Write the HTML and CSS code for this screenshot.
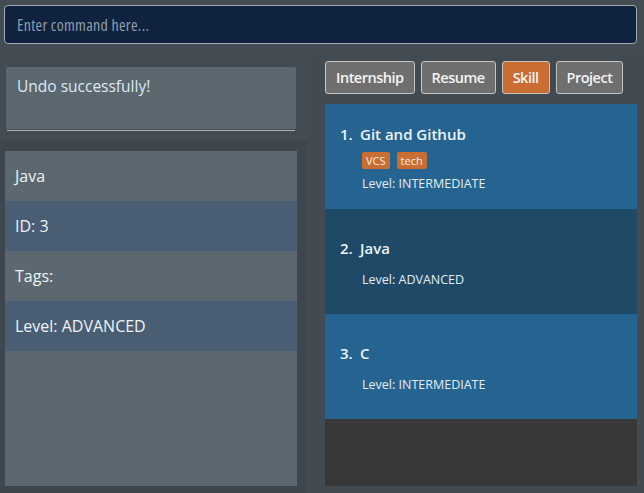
FILE: index.html
```html
<!DOCTYPE html>
<html>
<head>
<meta charset="utf-8">
<link rel="stylesheet" href="styles.css">
</head>
<body>
<div class="app">
  <div class="command">
    <input class="command-input" type="text" placeholder="Enter command here...">
  </div>
  <div class="main">
    <div class="left">
      <div class="result-wrap">
        <div class="result">Undo successfully!</div>
      </div>
      <div class="detail-wrap">
        <div class="detail">
          <div class="row odd">Java</div>
          <div class="row even">ID: 3</div>
          <div class="row odd">Tags:</div>
          <div class="row even">Level: ADVANCED</div>
          <div class="rest"></div>
        </div>
      </div>
    </div>
    <div class="right">
      <div class="tabs">
        <div class="tab">Internship</div>
        <div class="tab">Resume</div>
        <div class="tab active">Skill</div>
        <div class="tab">Project</div>
      </div>
      <div class="list">
        <div class="card light tagged">
          <div class="title"><span class="num">1.</span>Git and Github</div>
          <div class="tags"><span class="tag">VCS</span><span class="tag">tech</span></div>
          <div class="level">Level: INTERMEDIATE</div>
        </div>
        <div class="card dark">
          <div class="title"><span class="num">2.</span>Java</div>
          <div class="level">Level: ADVANCED</div>
        </div>
        <div class="card light">
          <div class="title"><span class="num">3.</span>C</div>
          <div class="level">Level: INTERMEDIATE</div>
        </div>
        <div class="empty"></div>
      </div>
    </div>
  </div>
</div>
</body>
</html>
```

FILE: styles.css
```css
* { box-sizing: border-box; }
html, body {
  margin: 0;
  padding: 0;
  width: 644px;
  height: 493px;
  overflow: hidden;
  background: #434b53;
  font-family: "Open Sans", "Noto Sans", sans-serif;
}
.app {
  display: flex;
  flex-direction: column;
  height: 493px;
}
.command {
  padding: 5px 7px 0 4px;
  height: 50px;
}
.command-input {
  display: block;
  width: 633px;
  height: 39px;
  margin: 0;
  background: #0f223f;
  border: 1px solid #a3a9ae;
  border-radius: 4px;
  padding: 0 12px;
  font-family: "Open Sans", "Noto Sans", sans-serif;
  font-size: 16px;
  font-stretch: 86%;
  letter-spacing: 0.3px;
  color: #c8d2dc;
  outline: none;
}
.command-input::placeholder { color: #8f9eab; }
.main {
  display: flex;
  flex: 1;
}
.left {
  width: 307px;
  display: flex;
  flex-direction: column;
}
.result-wrap {
  height: 90px;
  padding: 17px 10px 0 5px;
}
.result {
  margin-left: 1px;
  width: 290px;
  height: 63px;
  background: #5b6870;
  border-radius: 2px 2px 0 0;
  border-bottom: 1px solid #434b53;
  box-shadow: 0 2px 0 -1px #aab0b5;
  padding: 8px 11px;
  font-size: 15.5px;
  color: #dbe9f5;
}
.detail-wrap {
  flex: 1;
  background: #3e464e;
  padding: 11px 10px 7px 5px;
}
.detail {
  height: 100%;
  display: flex;
  flex-direction: column;
  background: #5b6870;
}
.row {
  height: 50px;
  display: flex;
  align-items: center;
  padding-left: 10px;
  font-size: 16px;
  color: #eef3f7;
}
.row.odd { background: #5b6870; }
.row.even { background: #4a5e73; }
.rest { flex: 1; }
.right {
  flex: 1;
  display: flex;
  flex-direction: column;
  padding: 11px 7px 7px 18px;
  background: #424a52;
}
.tabs {
  display: flex;
  gap: 6px;
  height: 33px;
}
.tab {
  height: 33px;
  padding: 0 10px;
  background: #6f6f6f;
  border: 1.5px solid #c4c4c4;
  border-radius: 3px;
  display: flex;
  align-items: center;
  font-size: 14.5px;
  font-weight: 600;
  letter-spacing: -0.5px;
  color: #f4f4f4;
}
.tab.active { background: #c96d32; }
.list {
  margin-top: 10px;
  flex: 1;
  display: flex;
  flex-direction: column;
  background: #383838;
}
.card {
  height: 105px;
  padding: 29px 0 0 15px;
  display: flex;
  flex-direction: column;
  color: #eef3f7;
}
.card.tagged { padding-top: 20px; }
.card.light { background: #256490; }
.card.dark { background: #1e4a68; }
.title {
  font-size: 15px;
  line-height: 20px;
  font-weight: 600;
  display: flex;
}
.num { width: 20px; }
.tags {
  display: flex;
  gap: 7px;
  margin: 8px 0 6px 22px;
}
.tag {
  background: #c96d32;
  color: #f5ede6;
  font-size: 11px;
  padding: 0 4px;
  height: 17px;
  line-height: 17px;
  border-radius: 2px;
}
.level {
  margin-left: 22px;
  margin-top: 13px;
  font-size: 12.5px;
  line-height: 17px;
  color: #e4ecf2;
}
.tags + .level { margin-top: 0; }
.empty { flex: 1; }
```
